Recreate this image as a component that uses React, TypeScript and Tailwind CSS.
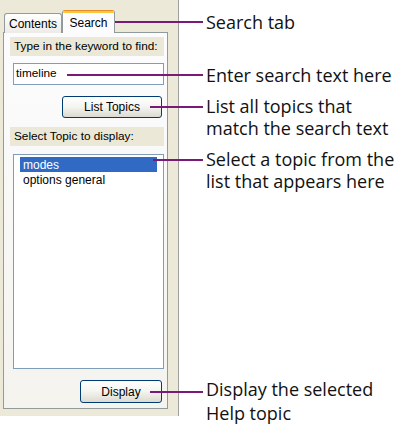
import React from "react";

const ui = { fontFamily: '"Liberation Sans", Arial, sans-serif' };
const callout = { fontFamily: '"Open Sans", "Noto Sans", sans-serif' };

function Line({ x1, y }: { x1: number; y: number }) {
  return (
    <div
      className="absolute h-[2px] bg-[#7a1a78]"
      style={{ left: x1, top: y - 1, width: 203 - x1 }}
    />
  );
}

export default function App() {
  return (
    <div className="relative w-[400px] h-[424px] bg-white flex overflow-hidden">
      {/* Left help pane */}
      <div className="w-[179px] h-[416px] bg-[#ece9d8] border-r border-[#a0a0a0] flex flex-col pl-[3px] pr-[10px] shrink-0" style={ui}>
        {/* tabs */}
        <div className="h-[32px] flex items-end pl-[1px] relative z-10">
          <div className="w-[58px] h-[20px] border border-b-0 border-[#919b9c] bg-gradient-to-b from-white to-[#ecebe6] rounded-t-[3px] text-[12px] text-black flex items-center justify-center mb-[-1px]">
            Contents
          </div>
          <div className="w-[53px] h-[23px] border border-b-0 border-[#919b9c] border-t-0 bg-[#fcfcfe] rounded-t-[3px] text-[12px] text-black flex flex-col items-center mb-[-1px] overflow-hidden">
            <div className="w-full h-[3px] bg-[#ffc83c] border-t border-[#e68b2c]" />
            <div className="flex-1 flex items-center">Search</div>
          </div>
        </div>
        {/* tab panel */}
        <div className="h-[377px] border border-[#919b9c] bg-gradient-to-b from-[#fcfcfe] to-[#f4f3ee] flex flex-col pl-[6px] pr-[3px] pt-[4px]">
          <div className="h-[19px] bg-[#ebe8d7] text-[11.8px] text-black flex items-center pl-[4px]">
            Type in the keyword to find:
          </div>
          <div className="mt-[7px] ml-[3px] h-[22px] border border-[#7f9db9] bg-white text-[11.8px] text-black flex items-center pl-[2px]">
            timeline
          </div>
          <div className="mt-[11px] ml-[52px] w-[100px] h-[22px] border border-[#003c74] rounded-[3px] bg-gradient-to-b from-white via-[#f4f4f0] to-[#dcdad0] text-[12px] text-black flex items-center justify-center">
            List Topics
          </div>
          <div className="mt-[9px] h-[19px] bg-[#ebe8d7] text-[11.8px] text-black flex items-center pl-[4px]">
            Select Topic to display:
          </div>
          <div className="mt-[8px] ml-[3px] h-[215px] border border-[#7f9db9] bg-white flex flex-col pt-[2px] px-[6px] text-[12px]">
            <div className="h-[15px] bg-[#316ac5] text-white flex items-center pl-[3px]">modes</div>
            <div className="h-[15px] text-black flex items-center pl-[3px]">options general</div>
          </div>
          <div className="mt-[11px] ml-[70px] w-[82px] h-[23px] border border-[#003c74] rounded-[3px] bg-gradient-to-b from-white via-[#f4f4f0] to-[#dcdad0] text-[12px] text-black flex items-center justify-center">
            Display
          </div>
        </div>
      </div>

      {/* Callouts */}
      <div className="flex flex-col pl-[27px] text-[18px] leading-[22px] text-[#111]" style={callout}>
        <div className="mt-[11px]">Search tab</div>
        <div className="mt-[31px]">Enter search text here</div>
        <div className="mt-[9px]">List all topics that<br />match the search text</div>
        <div className="mt-[9px]">Select a topic from the<br />list that appears here</div>
        <div className="mt-[185px] leading-[24px]">Display the selected<br />Help topic</div>
      </div>

      <Line x1={113} y={22} />
      <Line x1={67} y={75} />
      <Line x1={150} y={107} />
      <Line x1={153} y={160} />
      <Line x1={150} y={392} />
    </div>
  );
}
